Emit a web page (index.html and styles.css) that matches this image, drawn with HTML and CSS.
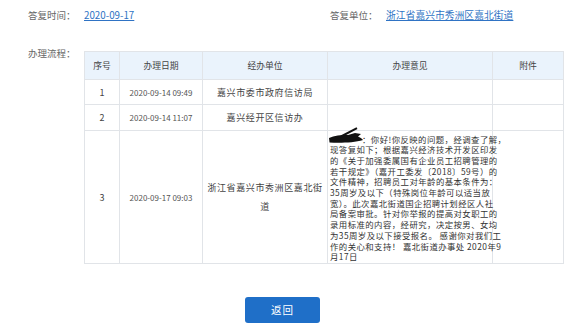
FILE: index.html
```html
<!DOCTYPE html>
<html lang="zh-CN">
<head>
    <meta charset="UTF-8">
    <meta name="viewport" content="width=device-width, initial-scale=1.0">
    <title>答复详情</title>
    <link rel="stylesheet" href="styles.css">
</head>
<body>
    <div class="reply-info">
        <div class="field">
            <span class="label">答复时间：</span>
            <a href="#" class="link">2020-09-17</a>
        </div>
        <div class="field">
            <span class="label">答复单位：</span>
            <a href="#" class="link">浙江省嘉兴市秀洲区嘉北街道</a>
        </div>
    </div>

    <div class="process">
        <span class="label">办理流程：</span>
        <table class="flow-table">
            <colgroup>
                <col class="col-no">
                <col class="col-date">
                <col class="col-unit">
                <col class="col-opinion">
                <col class="col-file">
            </colgroup>
            <thead>
                <tr>
                    <th>序号</th>
                    <th>办理日期</th>
                    <th>经办单位</th>
                    <th>办理意见</th>
                    <th>附件</th>
                </tr>
            </thead>
            <tbody>
                <tr class="row-1">
                    <td>1</td>
                    <td class="date">2020-09-14 09:49</td>
                    <td class="unit">嘉兴市委市政府信访局</td>
                    <td></td>
                    <td></td>
                </tr>
                <tr class="row-2">
                    <td>2</td>
                    <td class="date">2020-09-14 11:07</td>
                    <td class="unit">嘉兴经开区信访办</td>
                    <td></td>
                    <td></td>
                </tr>
                <tr class="row-3">
                    <td>3</td>
                    <td class="date">2020-09-17 09:03</td>
                    <td class="unit">浙江省嘉兴市秀洲区嘉北街<br>道</td>
                    <td class="opinion">
                        <span class="redacted">
                            <svg viewBox="0 0 36 16" width="36" height="16">
                                <path d="M1 11 C6 8.5 13 8 20 8 L27 6 L33 7 L30 9.5 C32 10.5 34 11.5 35 13 C26 15.8 12 16 1.5 15.5 Z" fill="#111"/>
                                <path d="M13 9.5 L29 1.2" stroke="#111" stroke-width="2" fill="none"/>
                            </svg>
                        </span>：你好!你反映的问题，经调查了解，<br>现答复如下；根据嘉兴经济技术开发区印发<br>的《关于加强委属国有企业员工招聘管理的<br>若干规定》（嘉开工委发〔2018〕59号）的<br>文件精神，招聘员工对年龄的基本条件为：<br>35周岁及以下（特殊岗位年龄可以适当放<br>宽）。此次嘉北街道国企招聘计划经区人社<br>局备案审批。针对你举报的提高对女职工的<br>录用标准的内容，经研究，决定按男、女均<br>为35周岁及以下接受报名。 感谢你对我们工<br>作的关心和支持！ 嘉北街道办事处 2020年9<br>月17日
                    </td>
                    <td></td>
                </tr>
            </tbody>
        </table>
    </div>

    <div class="actions">
        <button class="btn-back">返回</button>
    </div>
</body>
</html>
```

FILE: styles.css
```css
* {
    margin: 0;
    padding: 0;
    box-sizing: border-box;
}

body {
    font-family: "Noto Sans CJK SC", "Noto Sans", sans-serif;
    color: #555;
    background-color: #fff;
    width: 580px;
    height: 323px;
    overflow: hidden;
}

.reply-info {
    display: grid;
    grid-template-columns: 302px 1fr;
    padding: 8px 0 0 28px;
    height: 51px;
}

.field {
    display: flex;
    align-items: center;
    height: 14px;
}

.label {
    display: inline-block;
    width: 56px;
    flex: none;
    font-size: 9.5px;
    line-height: 14px;
    color: #666;
}

.link {
    font-size: 9.8px;
    color: #2f73c4;
    text-decoration: underline;
}

.process {
    display: flex;
    padding-left: 28px;
}

.process .label {
    line-height: 10px;
    margin-top: -3px;
}

.flow-table {
    width: 479px;
    border-collapse: collapse;
    table-layout: fixed;
    color: #444;
}

.col-no { width: 35px; }
.col-date { width: 83px; }
.col-unit { width: 125px; }
.col-opinion { width: 165px; }
.col-file { width: 71px; }

.flow-table th,
.flow-table td {
    border: 1px solid #e1e4e8;
    text-align: center;
    vertical-align: middle;
    font-weight: normal;
}

.flow-table th {
    background-color: #eaf3fc;
    font-size: 8.8px;
    height: 28px;
    color: #444;
}

.flow-table td {
    font-size: 9px;
}

.row-1 td { height: 25px; }
.row-2 td { height: 26px; }
.row-3 td { height: 133px; }

.flow-table .date {
    font-size: 8px;
    color: #555;
}

.flow-table .unit {
    font-size: 9px;
    letter-spacing: 0.6px;
    line-height: 19px;
    padding: 0 4px;
}

.flow-table .opinion {
    text-align: left;
    vertical-align: top;
    font-size: 8.4px;
    line-height: 10.7px;
    padding: 2.5px 0 0 2px;
    color: #333;
    white-space: nowrap;
    letter-spacing: 0.45px;
}

.redacted {
    display: inline-block;
    position: relative;
    width: 32px;
    height: 8px;
}

.redacted svg {
    position: absolute;
    left: -2px;
    top: -8px;
}

.actions {
    padding: 31px 0 0 245px;
}

.btn-back {
    width: 75px;
    height: 26px;
    border: none;
    border-radius: 3px;
    background-color: #1f6fc8;
    color: #fff;
    font-family: inherit;
    font-size: 10.5px;
    letter-spacing: 1px;
}
```
